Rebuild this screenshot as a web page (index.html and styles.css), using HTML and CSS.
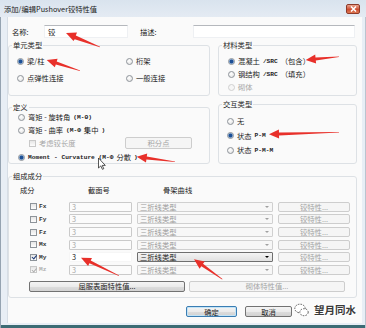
FILE: index.html
```html
<!DOCTYPE html>
<html lang="zh-CN">
<head>
  <meta charset="UTF-8" />
  <meta name="viewport" content="width=device-width, initial-scale=1.0"/>
  <title>添加/编辑Pushover铰特性值</title>
  <link rel="stylesheet" href="styles.css">
</head>
<body>
  <div class="window">
    <div class="titlebar">
      <span class="title">添加/编辑Pushover铰特性值</span>
      <span class="close">
        <svg width="7" height="6" viewBox="0 0 7 6"><path d="M1 0.5 L6 5.5 M6 0.5 L1 5.5" stroke="#fff" stroke-width="1.5"/></svg>
      </span>
    </div>

    <div class="client">
      <div class="name-row">
        <span class="name-label">名称:</span>
        <div class="textbox name-box">铰</div>
        <span class="desc-label">描述:</span>
        <div class="textbox desc-box"></div>
      </div>

      <div class="top-grid">
        <div class="col col-left">
          <fieldset class="group elem-group">
            <legend>单元类型</legend>
            <div class="elem-list">
              <span class="opt"><i class="radio on"></i>梁/柱</span>
              <span class="opt"><i class="radio"></i>桁架</span>
              <span class="opt"><i class="radio"></i>点弹性连接</span>
              <span class="opt"><i class="radio"></i>一般连接</span>
            </div>
          </fieldset>

          <fieldset class="group def-group">
            <legend>定义</legend>
            <div class="def-list">
              <span class="opt"><i class="radio"></i>弯矩 - 旋转角 <span class="mono">(M-Θ)</span></span>
              <span class="opt"><i class="radio"></i>弯矩 - 曲率 <span class="mono">(M-Φ</span>集中<span class="mono">)</span></span>
              <div class="hinge-row">
                <span class="opt off"><i class="check"></i>考虑铰长度</span>
                <span class="btn off">积分点</span>
              </div>
              <span class="opt"><i class="radio on"></i><span class="mono">Moment - Curvature (M-Φ</span>分散<span class="mono">)</span></span>
            </div>
          </fieldset>
        </div>

        <div class="col col-right">
          <fieldset class="group mat-group">
            <legend>材料类型</legend>
            <div class="mat-list">
              <span class="opt"><i class="radio on"></i>混凝土<span class="mono">/SRC</span>（包含）</span>
              <span class="opt"><i class="radio"></i>钢结构<span class="mono">/SRC</span>（填充）</span>
              <span class="opt off"><i class="radio"></i>砌体</span>
            </div>
          </fieldset>

          <fieldset class="group inter-group">
            <legend>交互类型</legend>
            <div class="inter-list">
              <span class="opt"><i class="radio"></i>无</span>
              <span class="opt"><i class="radio on"></i>状态<span class="mono">P-M</span></span>
              <span class="opt"><i class="radio"></i>状态<span class="mono">P-M-M</span></span>
            </div>
          </fieldset>
        </div>
      </div>

      <fieldset class="group comp-group">
        <legend>组成成分</legend>
        <div class="comp-body">
          <div class="comp-head">
            <span>成分</span>
            <span class="head-sec">截面号</span>
            <span class="head-curve">骨架曲线</span>
          </div>

          <div class="comp-grid">
            <span class="opt comp-name"><i class="check"></i><span class="mono">Fx</span></span>
            <span class="field">3</span>
            <span class="select">三折线类型<i class="arrow"></i></span>
            <span class="btn off">铰特性...</span>

            <span class="opt comp-name"><i class="check"></i><span class="mono">Fy</span></span>
            <span class="field">3</span>
            <span class="select">三折线类型<i class="arrow"></i></span>
            <span class="btn off">铰特性...</span>

            <span class="opt comp-name"><i class="check"></i><span class="mono">Fz</span></span>
            <span class="field">3</span>
            <span class="select">三折线类型<i class="arrow"></i></span>
            <span class="btn off">铰特性...</span>

            <span class="opt comp-name"><i class="check"></i><span class="mono">Mx</span></span>
            <span class="field">3</span>
            <span class="select">三折线类型<i class="arrow"></i></span>
            <span class="btn off">铰特性...</span>

            <span class="opt comp-name"><i class="check on"></i><span class="mono">My</span></span>
            <span class="field on">3</span>
            <span class="select on">三折线类型<i class="arrow"></i></span>
            <span class="btn off">铰特性...</span>

            <span class="opt comp-name off"><i class="check on"></i><span class="mono">Mz</span></span>
            <span class="field">3</span>
            <span class="select">三折线类型<i class="arrow"></i></span>
            <span class="btn off">铰特性...</span>
          </div>

          <div class="surface-row">
            <span class="btn surface-btn">屈服表面特性值...</span>
            <span class="btn off surface-btn">砌体特性值...</span>
          </div>
        </div>
      </fieldset>

      <div class="dialog-buttons">
        <span class="btn default">确定</span>
        <span class="btn">取消</span>
      </div>
    </div>

    <div class="watermark">
      <svg width="15" height="14" viewBox="0 0 15 14">
        <ellipse cx="6" cy="5.5" rx="5.2" ry="4.3" fill="#fff" stroke="#555" stroke-dasharray="1.6 1.2"/>
        <ellipse cx="10" cy="9.2" rx="4.2" ry="3.5" fill="#fff" stroke="#555" stroke-dasharray="1.6 1.2"/>
      </svg>
      <span>望月同水</span>
    </div>

    <!-- red annotation arrows + mouse pointer -->
    <svg class="marks" width="366" height="328" viewBox="0 0 366 328">
      <g fill="#e8302a">
        <polygon points="100.1,46.7 75.8,35.4 77,32.6 66,33 73.5,41 74.7,39.2 99.9,47.3"/>
        <polygon points="80.1,70.4 56.7,61.6 57.6,58.8 46.7,60 54.8,67.3 55.8,64.5 79.9,71"/>
        <polygon points="339,56.4 315.5,57.5 315.2,54.5 305.7,60 316.1,63.5 315.8,60.5 339,57"/>
        <polygon points="175,161.4 146.8,156.5 147.2,153.5 136.7,156.7 146,162.5 146.4,159.5 175,162"/>
        <polygon points="339,132 279,132.5 278.9,129.5 269,134.3 279.1,138.5 279,135.5 339,132.6"/>
        <polygon points="119.1,275.4 90.7,260.6 92,257.9 81,257.7 88.1,266.1 89.4,263.3 118.9,276"/>
        <polygon points="222.5,279 203,263.8 204.8,261.4 194,259.3 199.6,268.8 201.3,266.3 222.1,279.6"/>
      </g>
      <path d="M0 0 L0 10 L2.3 7.9 L3.9 11.3 L5.3 10.7 L3.7 7.4 L6.8 7.4 Z" transform="translate(98.5 158)" fill="#fff" stroke="#111" stroke-width="0.7" stroke-linejoin="round"/>
    </svg>
  </div>
</body>
</html>
```

FILE: styles.css
```css
body {
  margin: 0;
  background: #fff;
  font-family: "Noto Sans CJK SC", "Liberation Sans", sans-serif;
  font-size: 7.3px;
  color: #222;
}
.window {
  position: relative;
  width: 366px;
  height: 328px;
  display: flex;
  flex-direction: column;
  background: #e8eef5;
  box-shadow: inset 1px 0 #95a3b1, inset -1px 0 #b9c4cf, inset 0 -3px #3c6b74;
  overflow: hidden;
}
.titlebar {
  height: 17px;
  flex: none;
  display: flex;
  align-items: center;
  justify-content: space-between;
  padding: 0 6px 0 4px;
  background: linear-gradient(#d9e3ee, #e4ebf3);
}
.title {
  color: #1a1a1a;
  line-height: 10px;
}
.close {
  width: 14px;
  height: 10px;
  box-sizing: border-box;
  display: flex;
  align-items: center;
  justify-content: center;
  border: 1px solid #8d3a2a;
  border-radius: 2px;
  background: linear-gradient(#e9a48f, #d0553a 50%, #c9472c 51%, #e07a55);
}
.client {
  flex: 1;
  margin: 0 4px 5px 7px;
  padding: 8px 0 0 0;
  background: #fafafa;
  border-left: 1px solid #d6dde5;
}

/* name / description */
.name-row {
  height: 13px;
  display: flex;
  align-items: center;
  padding-left: 4px;
  margin-bottom: 2px;
}
.name-label {
  width: 32px;
}
.desc-label {
  width: 53px;
  margin-left: 12px;
}
.textbox {
  height: 13px;
  box-sizing: border-box;
  display: flex;
  align-items: center;
  padding-left: 3px;
  border: 1px solid #eef0f3;
  border-top-color: #b5b8bd;
  background: #fff;
}
.name-box {
  width: 84px;
}
.desc-box {
  width: 162px;
}

/* group boxes */
.top-grid {
  display: grid;
  grid-template-columns: 202px 139px;
  column-gap: 8px;
}
.col {
  display: flex;
  flex-direction: column;
}
.col-left {
  gap: 6px;
}
.col-right {
  gap: 3px;
}
.group {
  margin: 0;
  padding: 0;
  min-width: 0;
  box-sizing: border-box;
  border: 1px solid #dde1e5;
  border-radius: 3px;
}
.group legend {
  margin-left: 3px;
  padding: 0 1px;
  line-height: 10px;
}
.elem-group { height: 56px; }
.def-group { height: 62px; }
.mat-group { height: 56px; }
.inter-group { height: 65px; }
.comp-group {
  width: 349px;
  height: 127px;
  margin-top: 7px;
}

.opt {
  display: flex;
  align-items: center;
  gap: 3px;
  height: 10px;
  white-space: nowrap;
}
.opt.off {
  color: #a6a6a6;
}
.radio {
  flex: none;
  width: 7px;
  height: 7px;
  box-sizing: border-box;
  border: 1px solid #8e949a;
  border-radius: 50%;
  background: radial-gradient(circle at 40% 35%, #fff, #dedede);
}
.radio.on {
  background: radial-gradient(circle, #1c4f95 0 1.5px, #86a9d4 2.2px, #f0f4f8 3px);
}
.off .radio {
  border-color: #d0d0d0;
  background: #f6f6f6;
}
.check {
  position: relative;
  flex: none;
  width: 7px;
  height: 7px;
  box-sizing: border-box;
  border: 1px solid #8e949a;
  background: linear-gradient(#e6e6e6, #fdfdfd);
}
.check.on::after {
  content: "";
  position: absolute;
  left: 1.6px;
  top: -0.5px;
  width: 1.6px;
  height: 3.6px;
  border-right: 1.2px solid #1d3b78;
  border-bottom: 1.2px solid #1d3b78;
  transform: rotate(40deg);
}
.off .check {
  border-color: #c8c8c8;
}
.off .check.on::after {
  border-color: #b0b0b0;
}
.mono {
  font-family: "Liberation Mono", "DejaVu Sans Mono", monospace;
  font-weight: bold;
  font-size: 6.2px;
}

.elem-list {
  display: grid;
  grid-template-columns: 109px auto;
  grid-auto-rows: 10px;
  row-gap: 7px;
  padding: 6px 0 0 8px;
}
.def-list {
  display: flex;
  flex-direction: column;
  gap: 3px;
  padding: 0 0 0 9px;
}
.hinge-row {
  display: grid;
  grid-template-columns: 107px 67px;
  height: 12px;
  align-items: center;
  margin-top: -1px;
}
.hinge-row .opt {
  padding-left: 11px;
}
.mat-list {
  display: flex;
  flex-direction: column;
  gap: 3px;
  padding: 6px 0 0 9px;
}
.inter-list {
  display: flex;
  flex-direction: column;
  gap: 4.5px;
  padding: 7px 0 0 8px;
}

/* buttons and fields */
.btn {
  display: flex;
  align-items: center;
  justify-content: center;
  height: 11px;
  box-sizing: border-box;
  border: 1px solid #727272;
  border-radius: 2px;
  background: linear-gradient(#f4f4f4, #ebebeb 50%, #dddddd 51%, #d2d2d2);
  white-space: nowrap;
}
.btn.off {
  border-color: #cdcdcd;
  background: #f5f5f5;
  color: #a4a4a4;
}
.btn.default {
  border-color: #3a7db3;
  box-shadow: inset 0 0 0 1px #c3e4f7;
}
.hinge-row .btn {
  height: 12px;
}

/* components */
.comp-body {
  padding: 4px 0 0 11px;
}
.comp-head,
.comp-grid {
  display: grid;
  grid-template-columns: 44px 63px 136px 72px;
  column-gap: 5px;
}
.comp-head {
  height: 10px;
  line-height: 10px;
}
.head-sec {
  padding-left: 19px;
}
.head-curve {
  padding-left: 26px;
}
.comp-grid {
  grid-auto-rows: 10px;
  row-gap: 2.66px;
  margin-top: 6.7px;
}
.comp-name {
  padding-left: 10px;
  gap: 2px;
}
.comp-name .mono {
  color: #333;
}
.comp-name.off .mono {
  color: #b0b0b0;
}
.comp-grid .btn {
  height: 10px;
}
.field {
  display: flex;
  align-items: center;
  box-sizing: border-box;
  padding-left: 2px;
  border: 1px solid #cacaca;
  border-radius: 1px;
  background: #fbfbfb;
  color: #a8a8a8;
}
.field.on {
  border-color: #f6f6f6;
  background: #fff;
  color: #222;
}
.select {
  display: flex;
  align-items: center;
  justify-content: space-between;
  box-sizing: border-box;
  padding: 0 3px 0 2px;
  border: 1px solid #d0d0d0;
  border-radius: 1px;
  background: #f7f7f7;
  color: #9a9a9a;
}
.select .arrow {
  width: 0;
  height: 0;
  border-left: 2px solid transparent;
  border-right: 2px solid transparent;
  border-top: 2.5px solid #a0a0a0;
}
.select.on {
  border-color: #6f6f6f;
  background: linear-gradient(#f4f4f4, #e1e1e1);
  color: #222;
}
.select.on .arrow {
  border-top-color: #000;
}
.surface-row {
  display: flex;
  gap: 4px;
  margin-top: 5.7px;
  padding-left: 9px;
}
.surface-btn {
  width: 156px;
}

.dialog-buttons {
  display: flex;
  gap: 8px;
  margin: 8px 0 0 178px;
}
.dialog-buttons .btn:first-child {
  width: 51px;
}
.dialog-buttons .btn:last-child {
  width: 47px;
}

/* overlays */
.watermark {
  position: absolute;
  left: 294px;
  top: 303px;
  display: flex;
  align-items: center;
  gap: 5px;
}
.watermark span {
  font-size: 10.5px;
  font-weight: bold;
  color: #3a3a3a;
  line-height: 14px;
  text-shadow: 0 0 1px #fff, 0 0 2px #fff, 1px 1px 0 #fff, -1px -1px 0 #fff;
}
.marks {
  position: absolute;
  left: 0;
  top: 0;
  pointer-events: none;
}
```
